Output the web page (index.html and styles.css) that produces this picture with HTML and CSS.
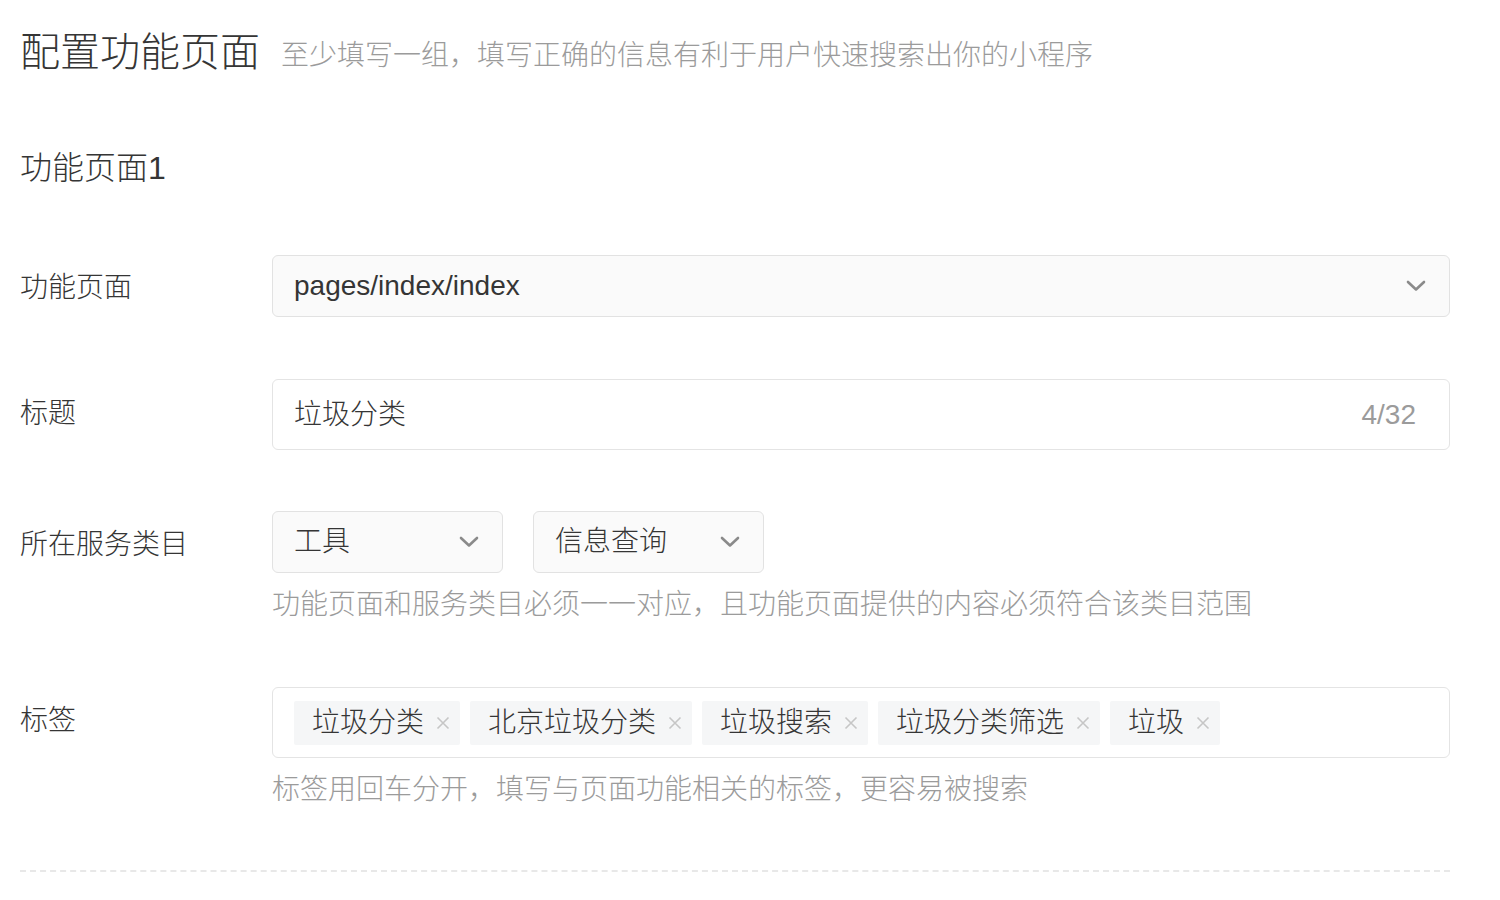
FILE: index.html
```html
<!DOCTYPE html>
<html lang="zh-CN">
<head>
  <meta charset="UTF-8">
  <title>配置功能页面</title>
  <link rel="stylesheet" href="styles.css">
</head>
<body>

  <div class="page">
    <div class="page-head">
      <h1>配置功能页面</h1>
      <span class="page-tip">至少填写一组，填写正确的信息有利于用户快速搜索出你的小程序</span>
    </div>

    <h2 class="group-title">功能页面1</h2>

    <div class="form-row row-page">
      <label class="form-label">功能页面</label>
      <div class="form-field">
        <div class="select select-full">
          <span class="select-value">pages/index/index</span>
          <svg class="chevron" width="20" height="12" viewBox="0 0 20 12"><polyline points="2,2 10,9.5 18,2" fill="none" stroke="#8a8a8a" stroke-width="2.6" stroke-linecap="round" stroke-linejoin="round"/></svg>
        </div>
      </div>
    </div>

    <div class="form-row row-title">
      <label class="form-label">标题</label>
      <div class="form-field">
        <div class="text-input">
          <span class="input-value">垃圾分类</span>
          <span class="counter">4/32</span>
        </div>
      </div>
    </div>

    <div class="form-row row-category">
      <label class="form-label">所在服务类目</label>
      <div class="form-field">
        <div class="select-group">
          <div class="select select-small">
            <span class="select-value">工具</span>
            <svg class="chevron" width="20" height="12" viewBox="0 0 20 12"><polyline points="2,2 10,9.5 18,2" fill="none" stroke="#8a8a8a" stroke-width="2.6" stroke-linecap="round" stroke-linejoin="round"/></svg>
          </div>
          <div class="select select-small">
            <span class="select-value">信息查询</span>
            <svg class="chevron" width="20" height="12" viewBox="0 0 20 12"><polyline points="2,2 10,9.5 18,2" fill="none" stroke="#8a8a8a" stroke-width="2.6" stroke-linecap="round" stroke-linejoin="round"/></svg>
          </div>
        </div>
        <p class="field-tip">功能页面和服务类目必须一一对应，且功能页面提供的内容必须符合该类目范围</p>
      </div>
    </div>

    <div class="form-row row-tags">
      <label class="form-label">标签</label>
      <div class="form-field">
        <div class="tag-input" id="tagInput"></div>
        <p class="field-tip tags-tip">标签用回车分开，填写与页面功能相关的标签，更容易被搜索</p>
      </div>
    </div>

    <div class="divider"></div>
  </div>

  <script>
    const tags = ["垃圾分类", "北京垃圾分类", "垃圾搜索", "垃圾分类筛选", "垃圾"];
    const tagInput = document.getElementById("tagInput");

    tags.forEach(function (name) {
      const tag = document.createElement("span");
      tag.className = "tag";
      tag.innerHTML = `<span class="tag-text">${name}</span>
        <svg class="tag-close" width="14" height="14" viewBox="0 0 14 14">
          <path d="M1.5 1.5 L12.5 12.5 M12.5 1.5 L1.5 12.5" stroke="#c6c6c6" stroke-width="1.6" fill="none"/>
        </svg>`;
      tagInput.appendChild(tag);
    });
  </script>

</body>
</html>
```

FILE: styles.css
```css
body {
  margin: 0;
  background: #fff;
  font-family: "Liberation Sans", "Noto Sans CJK SC", sans-serif;
  font-weight: 300;
  color: #353535;
}

.page {
  width: 1430px;
  padding: 0 20px;
}

.page-head {
  display: flex;
  align-items: center;
  height: 60px;
  margin-top: 22px;
}

h1 {
  margin: 0;
  font-size: 40px;
  font-weight: 300;
  line-height: 60px;
  color: #353535;
}

.page-tip {
  margin-left: 21px;
  font-size: 28px;
  color: #9b9b9b;
  line-height: 60px;
  padding-top: 8px;
}

.group-title {
  margin: 64px 0 0 0;
  font-size: 32px;
  font-weight: 300;
  line-height: 44px;
  color: #353535;
}

.form-row {
  display: flex;
  align-items: flex-start;
}

.row-page {
  margin-top: 65px;
}

/* label of the first row is 4px taller than its select */
.row-title {
  margin-top: 58px;
}

.row-category {
  margin-top: 61px;
}

.row-tags {
  margin-top: 62px;
}

.form-label {
  width: 252px;
  flex-shrink: 0;
  font-size: 28px;
  line-height: 66px;
  color: #353535;
}

.row-title .form-label {
  line-height: 70px;
}

.row-category .form-label,
.row-tags .form-label {
  line-height: 68px;
}

.form-field {
  flex: 1;
  min-width: 0;
}

.select {
  display: flex;
  align-items: center;
  justify-content: space-between;
  box-sizing: border-box;
  height: 62px;
  padding: 0 23px 0 21px;
  background: #fafafa;
  border: 1px solid #e2e2e2;
  border-radius: 6px;
  font-size: 28px;
  color: #353535;
}

.select-value,
.input-value,
.counter,
.tag-text {
  line-height: 36px;
}

.select-full {
  width: 100%;
}

.select-group {
  display: flex;
  gap: 30px;
}

.select-small {
  width: 231px;
}

.chevron {
  display: block;
  flex-shrink: 0;
}

.text-input {
  display: flex;
  align-items: center;
  justify-content: space-between;
  box-sizing: border-box;
  height: 71px;
  padding: 0 33px 0 21px;
  border: 1px solid #e4e4e4;
  border-radius: 6px;
  font-size: 28px;
}

.counter {
  color: #9b9b9b;
}

.field-tip {
  margin: 12px 0 0 0;
  font-size: 28px;
  line-height: 40px;
  color: #9b9b9b;
}

.tags-tip {
  margin-top: 12px;
}

.tag-input {
  display: flex;
  align-items: center;
  gap: 10px;
  box-sizing: border-box;
  height: 71px;
  padding: 0 21px;
  border: 1px solid #e4e4e4;
  border-radius: 6px;
}

.tag {
  display: flex;
  align-items: center;
  gap: 12px;
  height: 44px;
  padding: 0 10px 0 18px;
  background: #f5f6f7;
  border-radius: 2px;
  font-size: 28px;
  color: #353535;
}

.tag-close {
  display: block;
}

.divider {
  margin-top: 60px;
  border-top: 2px dashed #e8e8e8;
}
```
